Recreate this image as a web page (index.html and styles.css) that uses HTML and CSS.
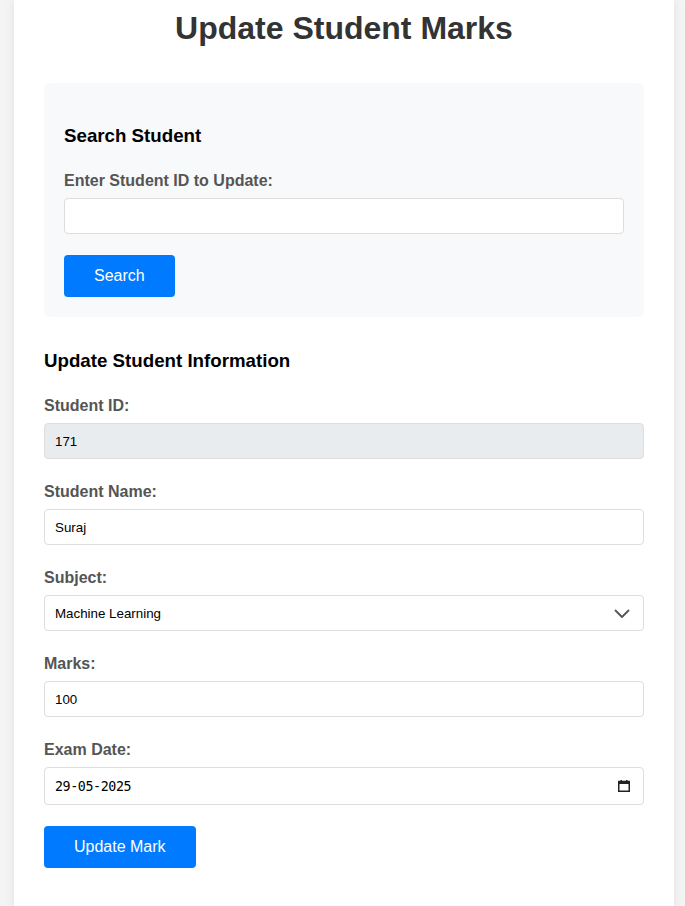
FILE: index.html
```html
<!DOCTYPE html>
<html lang="en">
<head>
<meta charset="utf-8">
<title>Update Student Marks</title>
<link rel="stylesheet" href="styles.css">
</head>
<body>
<div class="container">
  <h1 class="title">Update Student Marks</h1>

  <div class="search-box">
    <h3 class="section-title first">Search Student</h3>
    <div class="form-group search-group">
      <label class="label" for="search-id">Enter Student ID to Update:</label>
      <input class="input" id="search-id" type="text">
    </div>
    <button class="btn" type="button">Search</button>
  </div>

  <h3 class="section-title">Update Student Information</h3>
  <form class="update-form">
    <div class="form-group">
      <label class="label" for="sid">Student ID:</label>
      <input class="input readonly" id="sid" type="text" value="171" readonly>
    </div>
    <div class="form-group">
      <label class="label" for="sname">Student Name:</label>
      <input class="input" id="sname" type="text" value="Suraj">
    </div>
    <div class="form-group">
      <label class="label" for="subject">Subject:</label>
      <div class="field-wrap">
        <select class="input select" id="subject">
          <option>Machine Learning</option>
        </select>
        <svg class="field-icon chevron" width="16" height="10" viewBox="0 0 16 10" aria-hidden="true">
          <path d="M1.5 1.5 L8 8 L14.5 1.5" fill="none" stroke="#555" stroke-width="1.8" stroke-linecap="round" stroke-linejoin="round"/>
        </svg>
      </div>
    </div>
    <div class="form-group">
      <label class="label" for="marks">Marks:</label>
      <input class="input" id="marks" type="text" value="100">
    </div>
    <div class="form-group last">
      <label class="label" for="edate">Exam Date:</label>
      <div class="field-wrap">
        <input class="input date" id="edate" type="text" value="29-05-2025">
        <svg class="field-icon calendar" width="12" height="12" viewBox="0 0 12 12" aria-hidden="true">
          <rect x="0.75" y="1.5" width="10.5" height="9.75" fill="none" stroke="#222" stroke-width="1.5"/>
          <rect x="0.75" y="1.5" width="10.5" height="2.5" fill="#222"/>
          <rect x="2.5" y="0" width="1.5" height="2" fill="#222"/>
          <rect x="8" y="0" width="1.5" height="2" fill="#222"/>
        </svg>
      </div>
    </div>
    <button class="btn" type="button">Update Mark</button>
  </form>
</div>
</body>
</html>
```
FILE: styles.css
```css
html, body {
  margin: 0;
  padding: 0;
}
body {
  background: #f4f4f4;
  font-family: "Liberation Sans", Arial, sans-serif;
  color: #333;
}
.container {
  width: 600px;
  margin: 0 0 0 14px;
  padding: 10px 30px 40px;
  background: #fff;
  box-shadow: 0 0 10px rgba(0, 0, 0, 0.08);
  min-height: 856px;
}
.title {
  margin: 0 0 36px;
  font-size: 32px;
  font-weight: bold;
  text-align: center;
  color: #333;
}
.search-box {
  background: #f8f9fa;
  border-radius: 6px;
  padding: 20px;
  margin-bottom: 33px;
}
.section-title {
  margin: 0 0 25px;
  font-size: 18.72px;
  font-weight: bold;
  color: #000;
}
.section-title.first {
  margin-top: 22px;
}
.form-group {
  margin-bottom: 24px;
}
.form-group.search-group {
  margin-bottom: 21px;
}
.form-group.last {
  margin-bottom: 21px;
}
.label {
  display: block;
  font-size: 16px;
  line-height: 18px;
  font-weight: bold;
  color: #555;
  margin-bottom: 8px;
}
.field-wrap {
  position: relative;
}
.input {
  display: block;
  box-sizing: border-box;
  width: 100%;
  height: 36px;
  margin: 0;
  padding: 0 10px;
  border: 1px solid #ddd;
  border-radius: 4px;
  background: #fff;
  font-family: "Liberation Sans", Arial, sans-serif;
  font-size: 13.33px;
  color: #000;
  outline: none;
}
.input.readonly {
  background: #e9ecef;
}
.input.select {
  -webkit-appearance: none;
  appearance: none;
  padding-right: 40px;
}
.input.date {
  height: 38px;
  font-family: "DejaVu Sans Mono", monospace;
  letter-spacing: -0.4px;
}
.field-icon {
  position: absolute;
  top: 50%;
  pointer-events: none;
}
.chevron {
  right: 14px;
  margin-top: -4px;
}
.calendar {
  right: 14px;
  margin-top: -6px;
}
.btn {
  display: inline-block;
  padding: 12px 30px;
  border: none;
  border-radius: 4px;
  background: #007bff;
  color: #fff;
  font-family: "Liberation Sans", Arial, sans-serif;
  font-size: 16px;
  line-height: 18px;
  cursor: pointer;
}
.update-form {
  margin: 0;
}
```
